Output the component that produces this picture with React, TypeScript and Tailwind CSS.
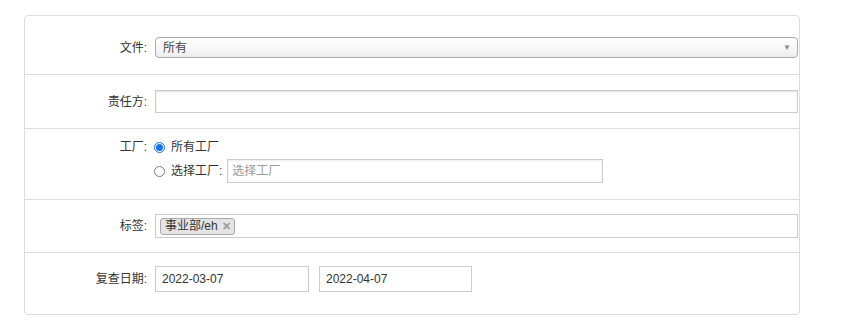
const font = { fontFamily: '"Liberation Sans", "Noto Sans CJK SC", sans-serif' }

function Label({ children }: { children: string }) {
  return <div className="w-[123px] shrink-0 pr-[1px] text-right text-[12px] text-[#333]">{children}</div>
}

export default function App() {
  return (
    <div className="h-[321px] w-[849px] bg-white pt-[15px] pl-[24px]" style={font}>
      <div className="w-[776px] rounded-[4px] border border-[#ddd]">
        <div className="flex items-center pt-[21px] pb-[16px]">
          <Label>文件:</Label>
          <div className="ml-[7px] flex h-[21px] w-[643px] items-center justify-between rounded-[4px] border border-[#aaa] bg-gradient-to-b from-white to-[#eee] pl-[7px] pr-[6px] text-[12px] text-[#444]">
            <span>所有</span>
            <span className="text-[8px] text-[#888]">▼</span>
          </div>
        </div>
        <div className="flex items-center border-t border-[#ddd] pt-[15px] pb-[15px]">
          <Label>责任方:</Label>
          <div className="ml-[7px] h-[23px] w-[643px] border border-[#ccc] shadow-[inset_0_1px_2px_rgba(0,0,0,0.12)]" />
        </div>
        <div className="flex border-t border-[#ddd] pt-[9px] pb-[16px]">
          <Label>工厂:</Label>
          <div className="ml-[6px] flex flex-col gap-[3px] text-[12px] text-[#333]">
            <label className="flex items-center gap-[6px]">
              <span className="flex h-[11px] w-[11px] items-center justify-center rounded-full border border-[#1a73e8] bg-white">
                <span className="h-[7px] w-[7px] rounded-full bg-[#1a73e8]" />
              </span>
              所有工厂
            </label>
            <label className="flex items-center gap-[5px]">
              <span className="mr-[1px] h-[11px] w-[11px] rounded-full border border-[#777] bg-white" />
              选择工厂:
              <span className="flex h-[24px] w-[376px] items-center border border-[#ccc] pl-[4px] text-[#999] shadow-[inset_0_1px_2px_rgba(0,0,0,0.08)]">
                选择工厂
              </span>
            </label>
          </div>
        </div>
        <div className="flex items-center border-t border-[#ddd] pt-[14px] pb-[14px]">
          <Label>标签:</Label>
          <div className="ml-[7px] flex h-[24px] w-[643px] items-center border border-[#ccc] pl-[4px]">
            <span className="flex h-[17px] items-center gap-[4px] rounded-[3px] border border-[#aaa] bg-[#e4e4e4] pl-[4px] pr-[3px] text-[12px] text-[#333]">
              事业部/eh
              <span className="text-[11px] font-bold leading-none text-[#999]">✕</span>
            </span>
          </div>
        </div>
        <div className="flex items-center border-t border-[#ddd] pt-[13px] pb-[22px]">
          <Label>复查日期:</Label>
          <div className="ml-[7px] flex gap-[10px]">
            <div className="flex h-[26px] w-[154px] items-center border border-[#ccc] pl-[6px] text-[12px] text-[#333]">2022-03-07</div>
            <div className="flex h-[26px] w-[153px] items-center border border-[#ccc] pl-[6px] text-[12px] text-[#333]">2022-04-07</div>
          </div>
        </div>
      </div>
    </div>
  )
}
